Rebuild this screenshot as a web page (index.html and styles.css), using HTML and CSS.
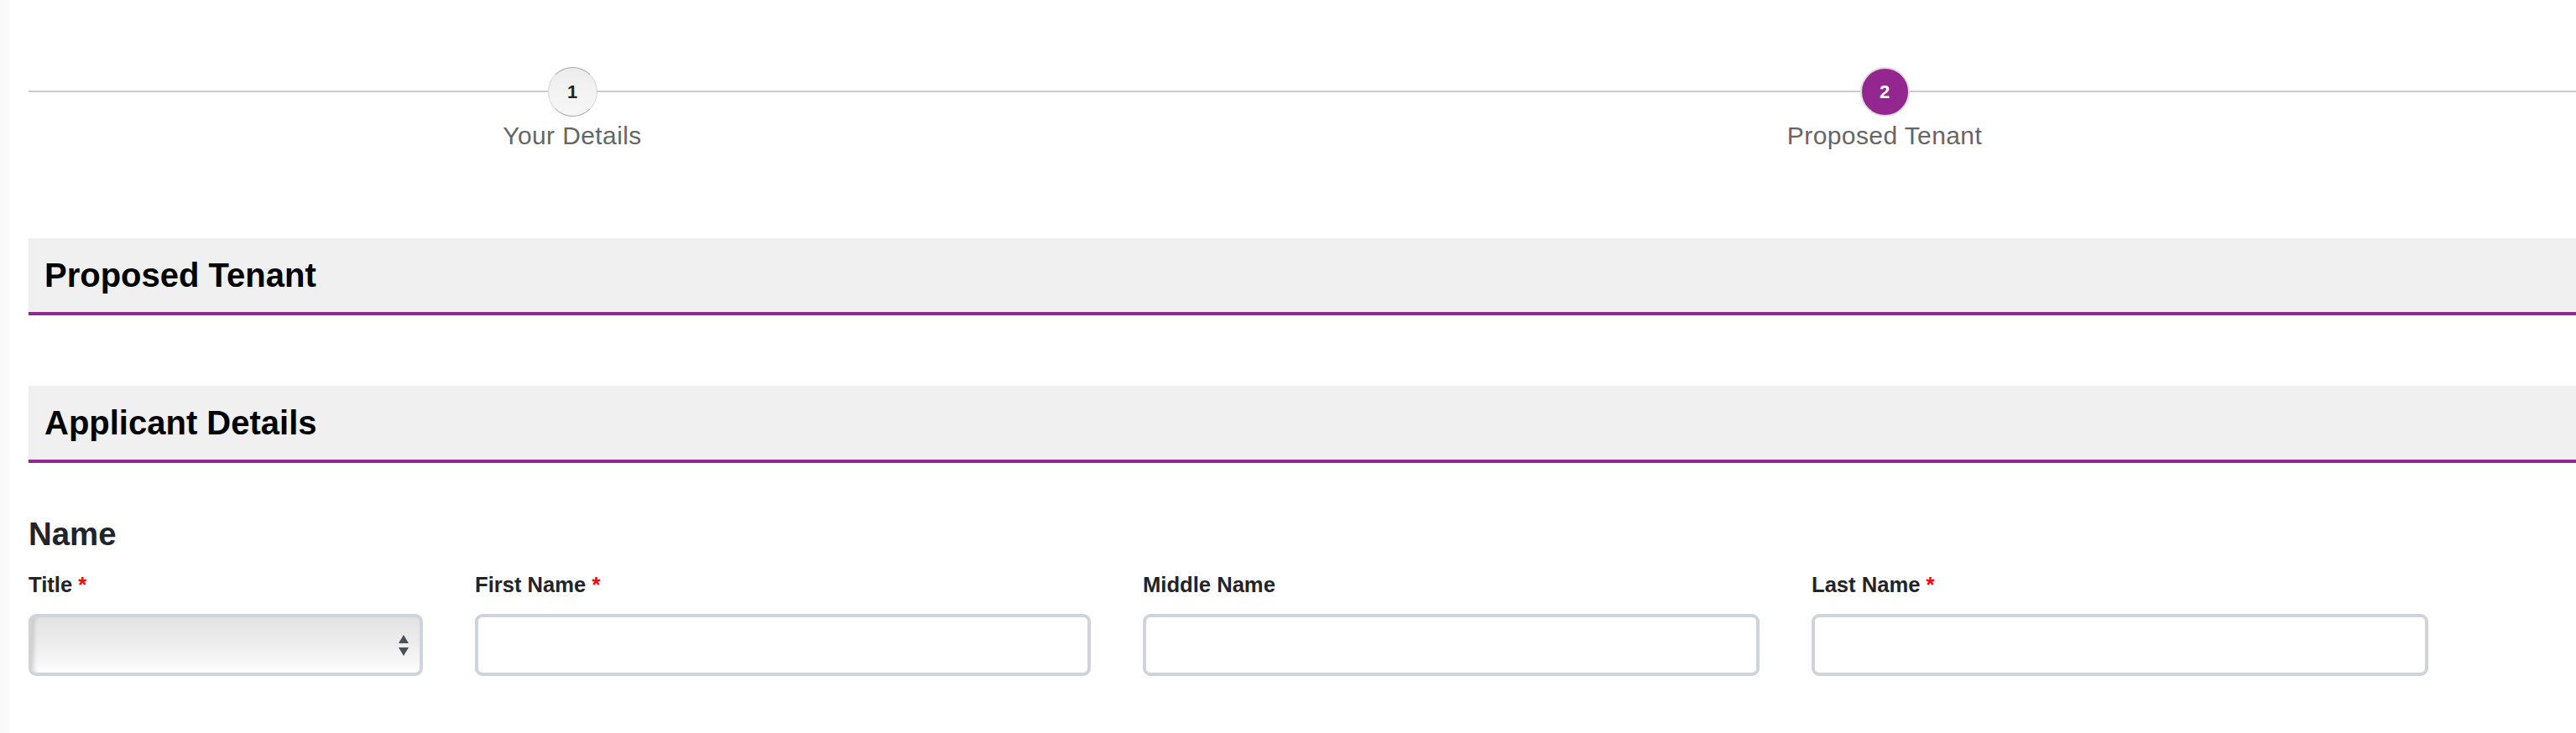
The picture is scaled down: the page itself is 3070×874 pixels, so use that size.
FILE: index.html
```html
<!DOCTYPE html>
<html lang="en">
<head>
<meta charset="utf-8">
<title>Proposed Tenant</title>
<link rel="stylesheet" href="styles.css">
</head>
<body>
<div class="page">
  <div class="stepper">
    <div class="step">
      <div class="step-num">1</div>
      <div class="step-label">Your Details</div>
    </div>
    <div class="step">
      <div class="step-num active">2</div>
      <div class="step-label">Proposed Tenant</div>
    </div>
  </div>

  <h2 class="section-head first">Proposed Tenant</h2>
  <h2 class="section-head second">Applicant Details</h2>

  <h3 class="group-title">Name</h3>
  <div class="fields">
    <div class="field f-title">
      <label class="field-label">Title <span class="req">*</span></label>
      <div class="select-box">
        <svg class="select-arrows" width="12" height="25" viewBox="0 0 12 25">
          <polygon points="6,0 12,10 0,10" fill="#4b5058"/>
          <polygon points="0,15 12,15 6,25" fill="#4b5058"/>
        </svg>
      </div>
    </div>
    <div class="field f-first">
      <label class="field-label">First Name <span class="req">*</span></label>
      <input class="text-input" type="text">
    </div>
    <div class="field f-middle">
      <label class="field-label">Middle Name</label>
      <input class="text-input" type="text">
    </div>
    <div class="field f-last">
      <label class="field-label">Last Name <span class="req">*</span></label>
      <input class="text-input" type="text">
    </div>
  </div>
</div>
</body>
</html>
```

FILE: styles.css
```css
html, body {
  margin: 0;
  padding: 0;
  height: 874px;
  overflow: hidden;
}

body {
  font-family: "Liberation Sans", Arial, Helvetica, sans-serif;
  background: linear-gradient(to right, #f9f9f9 0, #f9f9f9 12px, #ffffff 12px) no-repeat;
  background-color: #ffffff;
}

.page {
  padding: 80px 0 0 34px;
}

/* ---------- stepper ---------- */
.stepper {
  display: flex;
  background: linear-gradient(#cccccc, #cccccc) 0 28px / 100% 2px no-repeat;
}

.step {
  width: 300px;
  display: flex;
  flex-direction: column;
  align-items: center;
  flex: none;
}

.step:first-child {
  margin-left: 498px;
}

.step + .step {
  margin-left: 1264px;
}

.step-num {
  width: 57px;
  height: 57px;
  border-radius: 50%;
  border: 1px solid #d4d4d4;
  border-top-color: #a9a9a9;
  border-bottom-color: #a9a9a9;
  background: linear-gradient(#ececec, #f3f3f3 55%, #f6f6f6);
  display: flex;
  align-items: center;
  justify-content: center;
  font-size: 22px;
  font-weight: bold;
  color: #222222;
}

.step-num.active {
  width: 55px;
  height: 55px;
  border: 2px solid #dddddd;
  background: #93278f;
  color: #ffffff;
}

.step-label {
  margin-top: 6px;
  line-height: 34px;
  font-size: 30px;
  letter-spacing: 0.4px;
  color: #666666;
  white-space: nowrap;
}

/* ---------- section headers ---------- */
.section-head {
  margin: 0;
  height: 88px;
  line-height: 88px;
  padding-left: 19px;
  background: #f0f0f0;
  border-bottom: 4px solid #93278f;
  font-size: 40px;
  font-weight: bold;
  color: #000000;
}

.section-head.first {
  margin-top: 105px;
}

.section-head.second {
  margin-top: 84px;
}

/* ---------- form ---------- */
.group-title {
  margin: 62px 0 0 0;
  font-size: 38.4px;
  line-height: 46px;
  font-weight: bold;
  color: #212529;
}

.fields {
  display: flex;
  gap: 62px;
  margin-top: 22px;
}

.field {
  display: flex;
  flex-direction: column;
  flex: none;
}

.f-title { width: 470px; }
.f-first { width: 734px; }
.f-middle { width: 735px; }
.f-last { width: 735px; }

.field-label {
  font-size: 25.6px;
  line-height: 30px;
  font-weight: bold;
  color: #212529;
  margin-bottom: 20px;
  white-space: nowrap;
}

.req {
  color: #ff0000;
}

.text-input {
  box-sizing: border-box;
  width: 100%;
  height: 74px;
  margin: 0;
  border: 4px solid #cfd4db;
  border-radius: 9px;
  background: #ffffff;
  font: inherit;
  outline: none;
}

.select-box {
  box-sizing: border-box;
  width: 100%;
  height: 74px;
  border: 4px solid #cfd4db;
  border-radius: 9px;
  background: linear-gradient(#e3e3e3, #ececec 45%, #f8f8f8 85%, #ffffff);
  box-shadow: inset 5px 0 4px -2px rgba(0, 0, 0, 0.13), inset 0 -2px 0 #ffffff;
  display: flex;
  align-items: center;
  justify-content: flex-end;
  padding-right: 13px;
}

.select-arrows {
  display: block;
}
```
